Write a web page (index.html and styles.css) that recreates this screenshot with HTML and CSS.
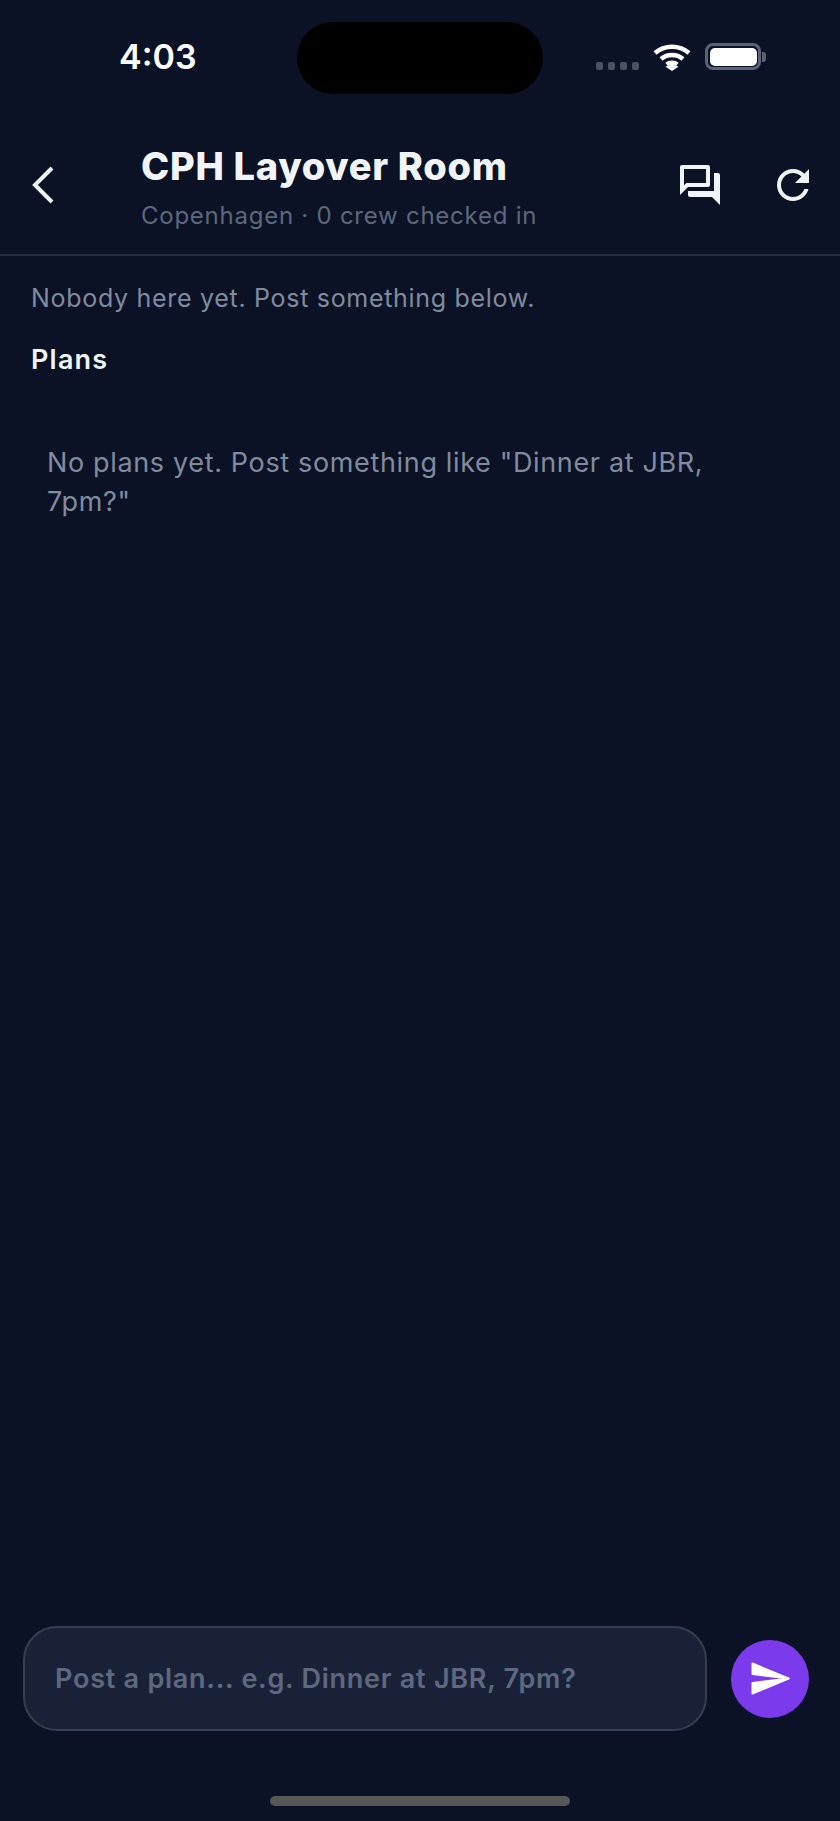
FILE: index.html
```html
<!DOCTYPE html>
<html lang="en">
<head>
<meta charset="utf-8">
<title>CPH Layover Room</title>
<link rel="stylesheet" href="styles.css">
</head>
<body>
<div class="screen">
  <div class="status">
    <span class="time">4:03</span>
    <div class="island"></div>
    <div class="status-right">
      <div class="signal"><i></i><i></i><i></i><i></i></div>
      <svg class="wifi" width="38" height="28" viewBox="0 0 38 28"><path d="M19 20.500l6.500 3.200-6.500 4.300-6.500-4.300z" fill="#fff"/><path d="M2 10C11.500 1.700 26.500 1.700 36 10M8 16C14.500 10.700 23.500 10.700 30 16" fill="none" stroke="#fff" stroke-width="4.400"/><path d="M13.500 21.300C16.500 18.900 21.500 18.900 24.500 21.300" fill="none" stroke="#fff" stroke-width="3.800"/></svg>
      <div class="battery"><div class="battery-body"><div class="battery-fill"></div></div><div class="battery-cap"></div></div>
    </div>
  </div>
  <header class="header">
    <svg class="back" width="24" height="40" viewBox="0 0 24 40"><path d="M22 3L5 20l17 17" fill="none" stroke="#f1f5f9" stroke-width="4"/></svg>
    <div class="titles">
      <h1 class="title">CPH Layover Room</h1>
      <p class="sub">Copenhagen · 0 crew checked in</p>
    </div>
    <div class="actions">
      <svg class="icon" width="48" height="48" viewBox="0 0 24 24"><path d="M15 4v7H5.170l-.59.59-.58.58V4h11m1-2H3c-.55 0-1 .45-1 1v14l4-4h10c.55 0 1-.45 1-1V3c0-.55-.45-1-1-1zm5 4h-2v9H6v2c0 .55.45 1 1 1h11l4 4V7c0-.55-.45-1-1-1z" fill="#f1f5f9"/></svg>
      <svg class="icon" width="48" height="48" viewBox="0 0 24 24"><path d="M17.650 6.350C16.200 4.900 14.210 4 12 4c-4.420 0-7.990 3.580-7.990 8s3.570 8 7.990 8c3.730 0 6.840-2.550 7.730-6h-2.080c-.82 2.330-3.040 4-5.650 4-3.310 0-6-2.690-6-6s2.690-6 6-6c1.660 0 3.140.69 4.220 1.780L13 11h7V4l-2.350 2.350z" fill="#f1f5f9"/></svg>
    </div>
  </header>
  <main class="content">
    <p class="note">Nobody here yet. Post something below.</p>
    <h2 class="section">Plans</h2>
    <p class="empty">No plans yet. Post something like "Dinner at JBR, 7pm?"</p>
  </main>
  <div class="composer">
    <div class="input"><span class="placeholder">Post a plan... e.g. Dinner at JBR, 7pm?</span></div>
    <div class="send">
      <svg width="39" height="33" viewBox="0 0 39 33"><path d="M1.500 1.500L37.500 16.500 1.500 12z" fill="#fff" stroke="#fff" stroke-width="2" stroke-linejoin="round"/><path d="M1.500 21L37.500 16.500 1.500 31.500z" fill="#fff" stroke="#fff" stroke-width="2" stroke-linejoin="round"/></svg>
    </div>
  </div>
  <div class="home-wrap"><div class="home"></div></div>
</div>
</body>
</html>
```
FILE: styles.css
```css
* { box-sizing: border-box; }
html, body { margin: 0; padding: 0; }
body { background: #0b1226; font-family: "Inter", "Liberation Sans", sans-serif; }
.screen { width: 840px; height: 1821px; display: flex; flex-direction: column; background: #0b1226; overflow: hidden; }

.status { height: 116px; display: flex; align-items: flex-start; padding: 22px 0 0 119px; }
.time { width: 178px; margin-top: 18px; font-size: 34px; line-height: 34px; font-weight: 600; color: #fff; }
.island { width: 246px; height: 72px; border-radius: 36px; background: #000; }
.status-right { display: flex; align-items: flex-start; margin-left: 53px; height: 60px; }
.signal { display: flex; gap: 5px; margin-top: 40px; }
.signal i { width: 7px; height: 8px; border-radius: 2px; background: #4a5163; display: block; }
.wifi { margin: 21px 0 0 14px; }
.battery { display: flex; align-items: center; margin: 21px 0 0 14px; }
.battery-body { width: 56px; height: 27px; border: 3px solid #5c6376; border-radius: 8px; padding: 1.500px; }
.battery-fill { width: 100%; height: 100%; background: #fff; border-radius: 5px; }
.battery-cap { width: 4px; height: 10px; background: #5c6376; border-radius: 0 3px 3px 0; margin-left: 1px; }

.header { height: 140px; display: flex; align-items: flex-start; border-bottom: 2px solid #252c3f; }
.back { margin: 49px 0 0 30px; flex: none; }
.titles { margin-left: 87px; flex: 1; padding-top: 27px; }
.title { margin: 0; font-size: 38px; line-height: 46px; font-weight: 800; color: #f1f5f9; letter-spacing: 0.700px; }
.sub { margin: 12px 0 0; font-size: 24px; line-height: 30px; color: #5d677d; letter-spacing: 0.750px; }
.actions { display: flex; align-items: flex-start; gap: 45px; margin: 45px 23px 0 0; }
.icon { display: block; }

.content { flex: 1; padding: 25px 0 0 31px; }
.note { margin: 0; font-size: 25px; line-height: 34px; color: #818b9f; letter-spacing: 0.700px; }
.section { margin: 27px 0 0; font-size: 27px; line-height: 36px; font-weight: 600; color: #f1f5f9; letter-spacing: 1.200px; }
.empty { margin: 65px 0 0; padding: 0 90px 0 16px; font-size: 27px; line-height: 39px; color: #818b9f; letter-spacing: 0.650px; }

.composer { display: flex; align-items: center; padding: 0 31px 0 23px; height: 105px; gap: 24px; }
.input { width: 685px; height: 105px; border: 2px solid #363e53; border-radius: 34px; background: #192138; display: flex; align-items: center; padding-left: 30px; }
.placeholder { font-size: 27px; font-weight: 600; color: #5e6980; letter-spacing: 0.750px; }
.send { width: 78px; height: 78px; border-radius: 50%; background: #7c3aed; display: flex; align-items: center; justify-content: center; }
.send svg { display: block; }

.home-wrap { height: 90px; padding-top: 65px; display: flex; justify-content: center; }
.home { width: 300px; height: 10px; border-radius: 5px; background: #575757; }
```
